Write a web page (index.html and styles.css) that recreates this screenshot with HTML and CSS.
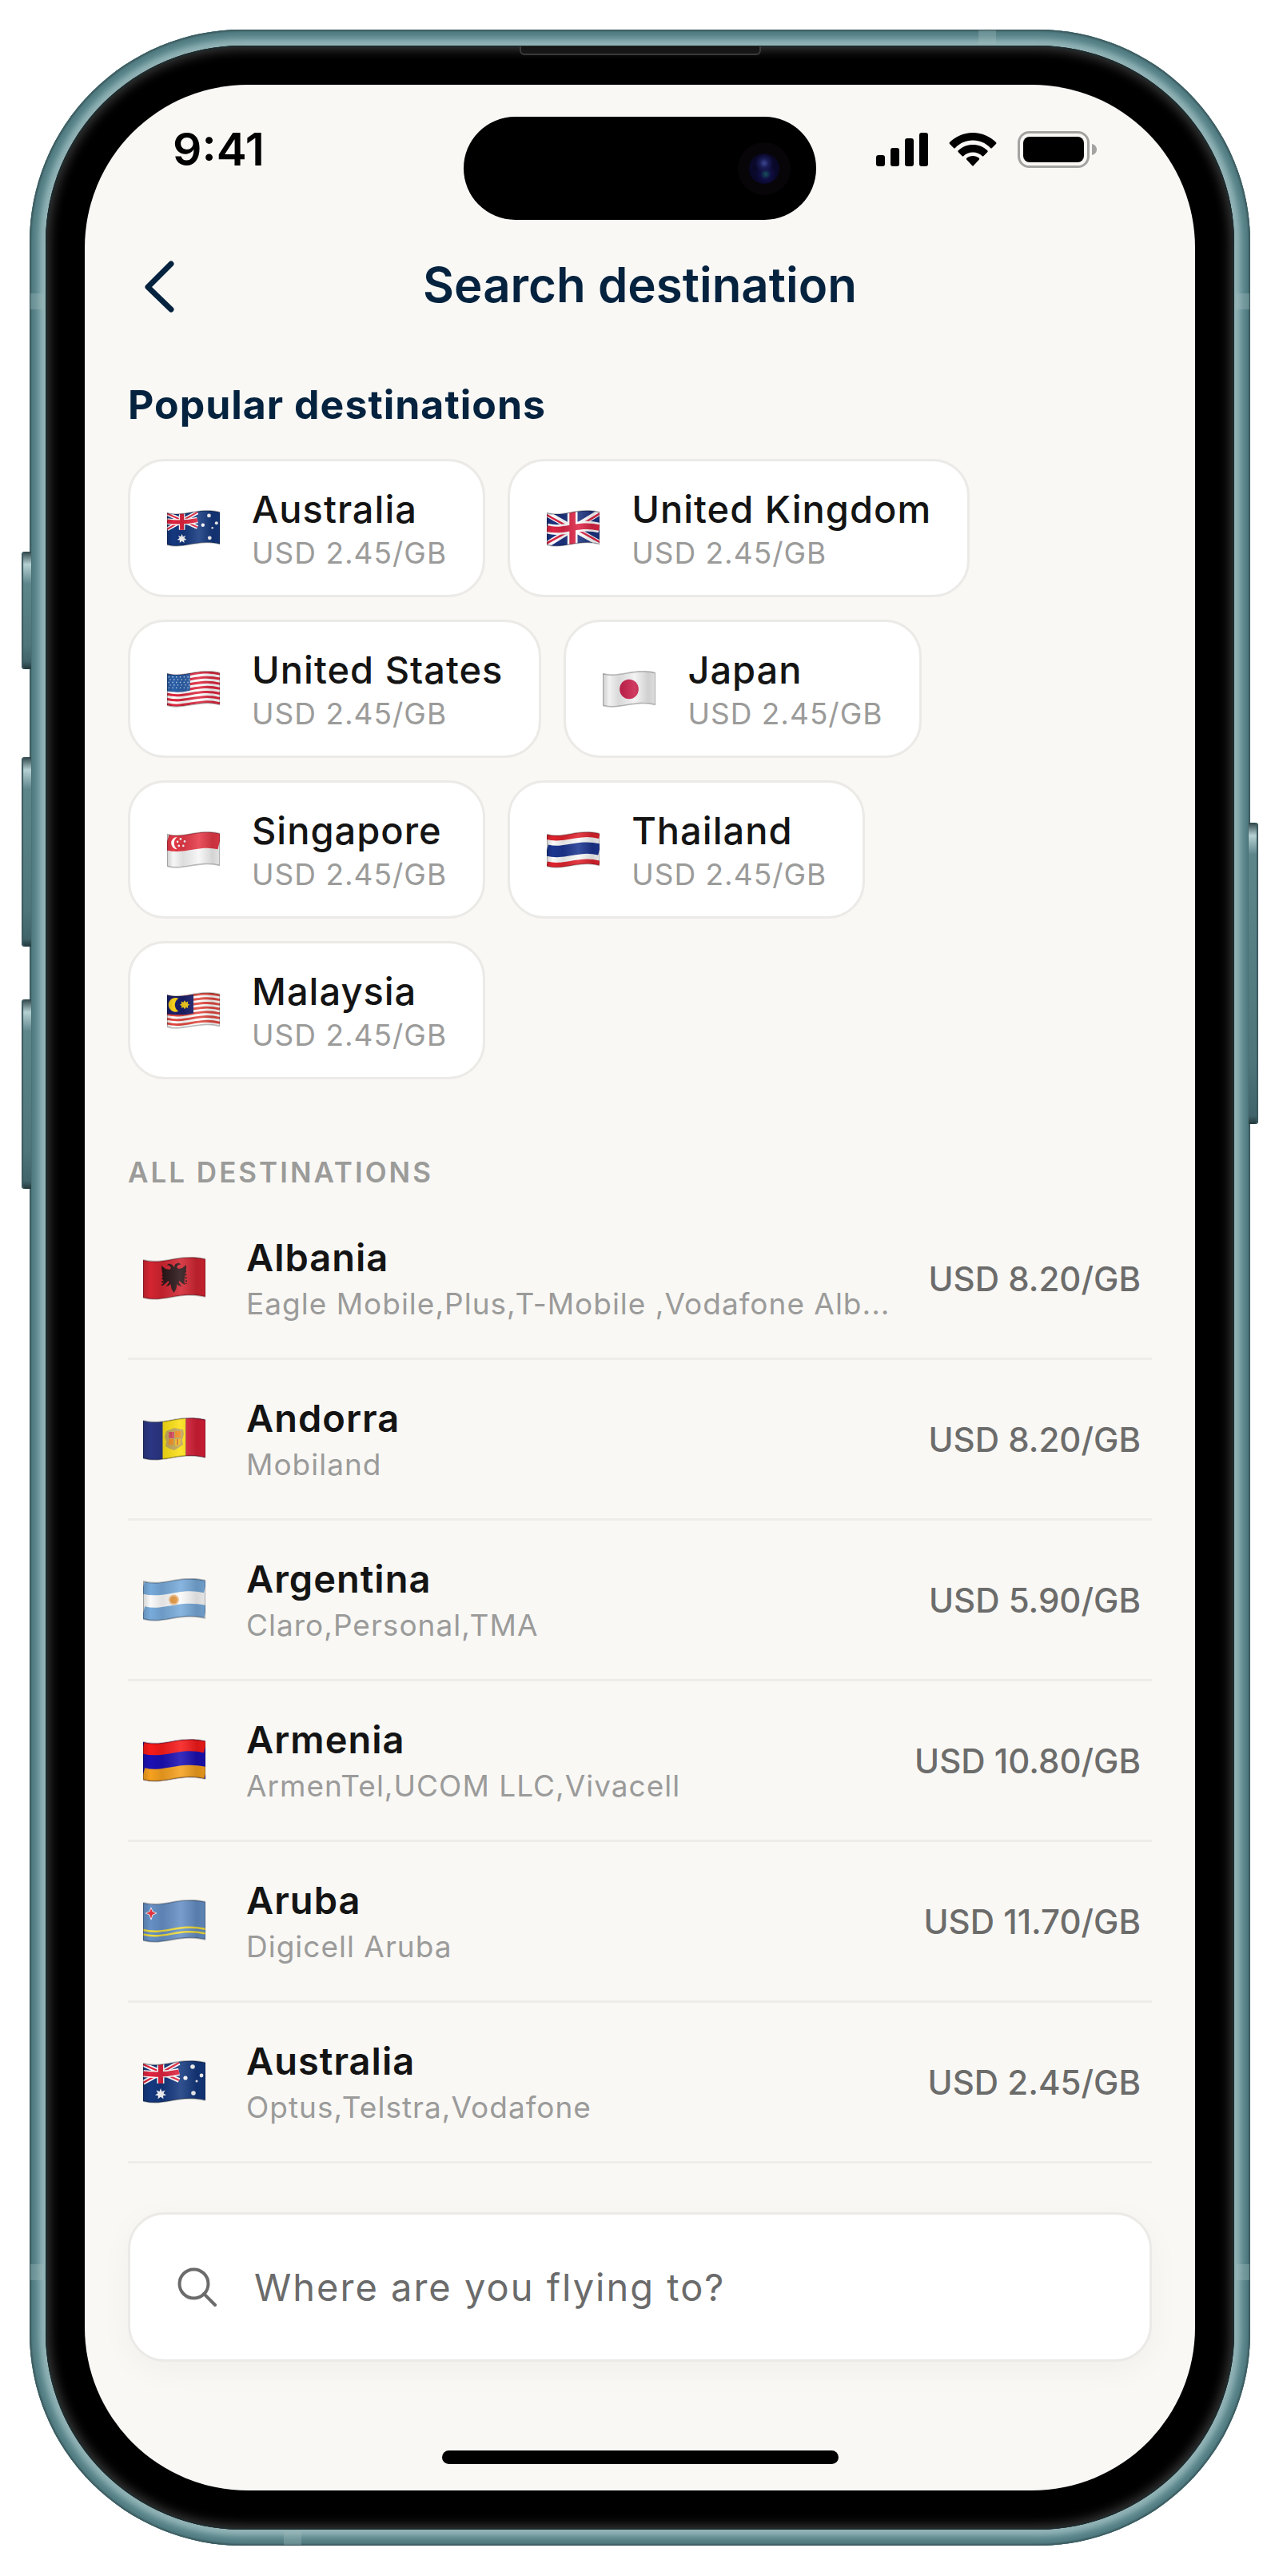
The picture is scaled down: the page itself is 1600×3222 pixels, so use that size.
FILE: index.html
```html
<!DOCTYPE html>
<html lang="en">
<head>
    <meta charset="UTF-8">
    <meta name="viewport" content="width=device-width, initial-scale=1.0">
    <title>Search destination</title>
    <link rel="stylesheet" href="styles.css">
</head>
<body>

    <!-- flag artwork, reused with <use> -->
    <svg class="sprite" aria-hidden="true">
        <defs>
            <clipPath id="cloth"><path d="M0 4c26 7 46-9 78-1v47c-32-8-52 8-78 1z"/></clipPath>
            <linearGradient id="shade">
                <stop offset="0" stop-color="#000" stop-opacity=".16"/>
                <stop offset=".12" stop-color="#000" stop-opacity="0"/>
                <stop offset=".3" stop-color="#000" stop-opacity=".1"/>
                <stop offset=".6" stop-color="#fff" stop-opacity=".12"/>
                <stop offset=".86" stop-color="#000" stop-opacity=".14"/>
                <stop offset="1" stop-color="#000" stop-opacity=".08"/>
            </linearGradient>
            <path id="band" fill="none" d="M0 0c26 7 46-9 78-1"/>
            <g id="fold">
                <path d="M0 4c26 7 46-9 78-1v47c-32-8-52 8-78 1z" fill="url(#shade)"/>
                <path d="M0 4c26 7 46-9 78-1v47c-32-8-52 8-78 1z" fill="none" stroke="#000" stroke-opacity=".25" stroke-width="2"/>
            </g>

            <symbol id="flag-au" viewBox="0 0 78 54">
                <g clip-path="url(#cloth)">
                    <rect width="78" height="54" fill="#14387f"/>
                    <path d="M0 5l45 20M0 28L45 3" stroke="#fff" stroke-width="6"/>
                    <path d="M0 5l45 20M0 28L45 3" stroke="#e0243f" stroke-width="2.4"/>
                    <path d="M22 2v27M0 16.500q22 3 45-2" stroke="#fff" stroke-width="9" fill="none"/>
                    <path d="M22 2v27M0 16.500q22 3 45-2" stroke="#e0243f" stroke-width="6" fill="none"/>
                    <path d="M22 35l1.500 4 4-1.500-2 3.700 3.500 2.300-4 .8.500 4-3.500-2.600-3.500 2.600.5-4-4-.8 3.500-2.300-2-3.700 4 1.500z" fill="#fff"/>
                    <g fill="#fff">
                        <circle cx="62" cy="8" r="2.800"/><circle cx="53" cy="22" r="2.600"/>
                        <circle cx="73" cy="19" r="2.400"/><circle cx="67" cy="26" r="1.500"/>
                        <circle cx="63" cy="41" r="2.800"/>
                    </g>
                </g>
                <use href="#fold"/>
            </symbol>

            <symbol id="flag-gb" viewBox="0 0 78 54">
                <g clip-path="url(#cloth)">
                    <rect width="78" height="54" fill="#1c3380"/>
                    <path d="M-2 4l82 46M-2 52L80 2" stroke="#fff" stroke-width="9"/>
                    <path d="M-2 6l40 22M80 48L40 26M-2 50l40-22M80 4L40 28" stroke="#dc2646" stroke-width="3"/>
                    <path d="M38 0v54" stroke="#fff" stroke-width="15"/>
                    <use href="#band" y="27" stroke="#fff" stroke-width="15"/>
                    <path d="M38 0v54" stroke="#dc2646" stroke-width="9"/>
                    <use href="#band" y="27" stroke="#dc2646" stroke-width="9"/>
                </g>
                <use href="#fold"/>
            </symbol>

            <symbol id="flag-us" viewBox="0 0 78 54">
                <g clip-path="url(#cloth)">
                    <rect width="78" height="54" fill="#fff"/>
                    <g stroke="#e0283f" stroke-width="3.600">
                        <use href="#band" y="5.500"/><use href="#band" y="12.800"/><use href="#band" y="20"/>
                        <use href="#band" y="27.200"/><use href="#band" y="34.400"/><use href="#band" y="41.600"/>
                        <use href="#band" y="49"/>
                    </g>
                    <path d="M0 3q17 4 34 0v26q-17 4-34 1z" fill="#2c5fa8"/>
                    <g stroke="#c9dcf2" stroke-width="1.600" stroke-dasharray="1.600 4">
                        <path d="M2 9h31M4 13h30M2 17h31M4 21h30M2 25h31"/>
                    </g>
                </g>
                <use href="#fold"/>
            </symbol>

            <symbol id="flag-jp" viewBox="0 0 78 54">
                <g clip-path="url(#cloth)">
                    <rect width="78" height="54" fill="#f1f1f1"/>
                    <ellipse cx="39" cy="27" rx="14" ry="14.500" fill="#c9204c"/>
                </g>
                <use href="#fold"/>
            </symbol>

            <symbol id="flag-sg" viewBox="0 0 78 54">
                <g clip-path="url(#cloth)">
                    <rect width="78" height="54" fill="#f6f6f6"/>
                    <use href="#band" y="15" stroke="#e63a48" stroke-width="25"/>
                    <path d="M15 8a9 9 0 1 0 0 18 11 11 0 0 1 0-18z" fill="#fff"/>
                    <g fill="#fff">
                        <circle cx="20" cy="11" r="1.600"/><circle cx="15.500" cy="15" r="1.600"/><circle cx="26" cy="14.500" r="1.600"/>
                        <circle cx="17.500" cy="21" r="1.600"/><circle cx="24" cy="21" r="1.600"/>
                    </g>
                </g>
                <use href="#fold"/>
            </symbol>

            <symbol id="flag-th" viewBox="0 0 78 54">
                <g clip-path="url(#cloth)">
                    <rect width="78" height="54" fill="#f8f8f8"/>
                    <use href="#band" y="7" stroke="#e0232e" stroke-width="9"/>
                    <use href="#band" y="27.500" stroke="#1c3590" stroke-width="17"/>
                    <use href="#band" y="48.500" stroke="#e0232e" stroke-width="9"/>
                </g>
                <use href="#fold"/>
            </symbol>

            <symbol id="flag-my" viewBox="0 0 78 54">
                <g clip-path="url(#cloth)">
                    <rect width="78" height="54" fill="#fff"/>
                    <g stroke="#e2483f" stroke-width="3.400">
                        <use href="#band" y="5.500"/><use href="#band" y="12.200"/><use href="#band" y="19"/>
                        <use href="#band" y="25.700"/><use href="#band" y="32.400"/><use href="#band" y="39.200"/>
                        <use href="#band" y="46"/>
                    </g>
                    <path d="M0 3q20 5 39 0v28q-20 4-39 1z" fill="#1a1f6c"/>
                    <path d="M17 9a10.500 10.500 0 1 0 0 19 11 11 0 0 1 0-19z" fill="#f6cf1d"/>
                    <path d="M26 12l2 3 3-1.500-.5 3.500 3 1.500-3 1.500.5 3.500-3-1.500-2 3-2-3-3 1.500.5-3.500-3-1.500 3-1.500-.5-3.500 3 1.500z" fill="#f6cf1d"/>
                </g>
                <use href="#fold"/>
            </symbol>

            <symbol id="flag-al" viewBox="0 0 78 54">
                <g clip-path="url(#cloth)">
                    <rect width="78" height="54" fill="#d32531"/>
                    <path d="M38.500 13l-2-3-4-1.500-3 2 3.500.5 2 3-2 2-5-1-5-4 .5 6 1 5 .5 5 .5 5-1 4 4-3 3-3 1 2-4 5 4-1 2-2 1 6 3 5 3-5 1-6 2 2 4 1-4-5 1-2 3 3 4 2-1-4 .500-5 .5-5 1-5 .5-6-5 4-5 1-2-2 2-3 3.500-.5-3-2-4 1.500z" fill="#2a1517"/>
                    <path d="M25 14l-1 22M53 13l1 21" stroke="#2a1517" stroke-width="1.600" stroke-dasharray="2.500 1.500"/>
                </g>
                <use href="#fold"/>
            </symbol>

            <symbol id="flag-ad" viewBox="0 0 78 54">
                <g clip-path="url(#cloth)">
                    <rect width="78" height="54" fill="#2b3684"/>
                    <rect x="24.500" width="29" height="54" fill="#fbe014"/>
                    <rect x="53.500" width="25" height="54" fill="#d81f37"/>
                    <path d="M29 17l5-2 5-2 5 1 6 1 1 6-2 7 1 6-6 4-5 3-6-2-5-3 1-6-2-6z" fill="#c3a655"/>
                    <path d="M32 18h7v8h-7z" fill="#d9506a"/>
                    <path d="M40 17h7v8h-7zM32 27h6v7h-6z" fill="#f08c1c"/>
                    <path d="M40 27h7l-1 7-6 2z" fill="#eebb22"/>
                    <path d="M43 27v7M35 18v7" stroke="#c5362f"/>
                </g>
                <use href="#fold"/>
            </symbol>

            <symbol id="flag-ar" viewBox="0 0 78 54">
                <g clip-path="url(#cloth)">
                    <rect width="78" height="54" fill="#fafafa"/>
                    <use href="#band" y="11" stroke="#78abdb" stroke-width="17"/>
                    <use href="#band" y="43.500" stroke="#78abdb" stroke-width="17"/>
                    <circle cx="38.500" cy="27" r="6.500" fill="#f0c08a"/>
                    <circle cx="38.500" cy="27" r="4.500" fill="#e2963f"/>
                </g>
                <use href="#fold"/>
            </symbol>

            <symbol id="flag-am" viewBox="0 0 78 54">
                <g clip-path="url(#cloth)">
                    <rect width="78" height="54" fill="#1c10b4"/>
                    <use href="#band" y="10" stroke="#f81b1b" stroke-width="17"/>
                    <use href="#band" y="44.500" stroke="#f6a11f" stroke-width="17"/>
                </g>
                <use href="#fold"/>
            </symbol>

            <symbol id="flag-aw" viewBox="0 0 78 54">
                <g clip-path="url(#cloth)">
                    <rect width="78" height="54" fill="#6690c6"/>
                    <path d="M10 10l2 5 5 2-5 2-2 6-2-6-5-2 5-2z" fill="#e5323c" stroke="#fff" stroke-width=".8"/>
                    <use href="#band" y="38" stroke="#f0dc3c" stroke-width="2.500"/>
                    <use href="#band" y="43.500" stroke="#f0dc3c" stroke-width="2.500"/>
                </g>
                <use href="#fold"/>
            </symbol>
        </defs>
    </svg>

    <div class="phone">
        <span class="side-btn action"></span>
        <span class="side-btn volume-up"></span>
        <span class="side-btn volume-down"></span>
        <span class="side-btn power"></span>
        <span class="band band-top"></span>
        <span class="band band-bottom"></span>
        <span class="band band-left-top"></span>
        <span class="band band-left-bottom"></span>
        <span class="band band-right-top"></span>
        <span class="band band-right-bottom"></span>

        <div class="bezel">
            <span class="speaker"></span>
            <div class="screen">

                <div class="status-bar">
                    <span class="time">9:41</span>
                    <div class="island"><span class="camera"></span></div>
                    <div class="status-icons">
                        <svg width="65" height="42" viewBox="0 0 65 42" aria-hidden="true">
                            <rect x="0" y="28" width="11" height="14" rx="3"/>
                            <rect x="18" y="19" width="11" height="23" rx="3"/>
                            <rect x="36" y="7" width="11" height="35" rx="3"/>
                            <rect x="54" y="0" width="11" height="42" rx="3"/>
                        </svg>
                        <svg width="60" height="42" viewBox="0 0 60 42" aria-hidden="true">
                            <path d="M30 0C18 0 8 5 1 12q-1 1 0 2l5 5q1 1 2 0C14 13 21 9.500 30 9.500S46 13 52 19q1 1 2 0l5-5q1-1 0-2C52 5 42 0 30 0z"/>
                            <path d="M30 15c-7 0-13 2.500-18 7-1 1-1 1.500 0 2.500l4.500 4.500q1 1 2 0c3-3 7-4.500 11.500-4.500S38.500 26 41.500 29q1 1 2 0l4.500-4.500c1-1 1-1.500 0-2.500-5-4.500-11-7-18-7z"/>
                            <path d="M30 29c-3 0-5.500 1-7.500 2.500-1 1-1 1.500 0 2.500l6.500 7q1 1 2 0l6.500-7c1-1 1-1.500 0-2.500C35.500 30 33 29 30 29z"/>
                        </svg>
                        <svg width="100" height="46" viewBox="0 0 100 46" aria-hidden="true">
                            <rect x="1.500" y="1.500" width="87" height="43" rx="13" fill="none" stroke="#a3a3a1" stroke-width="3"/>
                            <rect x="7" y="7" width="76" height="32" rx="8"/>
                            <path d="M93 16c4 1 6 4 6 7s-2 6-6 7z" fill="#a3a3a1"/>
                        </svg>
                    </div>
                </div>

                <header class="header">
                    <button class="back-btn" type="button" aria-label="Back">
                        <svg width="38" height="70" viewBox="0 0 38 70" aria-hidden="true"><path d="M34 9L5 38l29 28"/></svg>
                    </button>
                    <h1>Search destination</h1>
                </header>

                <main class="content">
                    <h2>Popular destinations</h2>
                    <div class="chips">
                        <button class="chip" type="button"><svg class="flag"><use href="#flag-au"/></svg><span class="info"><span class="name">Australia</span><span class="sub">USD 2.45/GB</span></span></button>
                        <button class="chip" type="button"><svg class="flag"><use href="#flag-gb"/></svg><span class="info"><span class="name">United Kingdom</span><span class="sub">USD 2.45/GB</span></span></button>
                        <button class="chip" type="button"><svg class="flag"><use href="#flag-us"/></svg><span class="info"><span class="name">United States</span><span class="sub">USD 2.45/GB</span></span></button>
                        <button class="chip" type="button"><svg class="flag"><use href="#flag-jp"/></svg><span class="info"><span class="name">Japan</span><span class="sub">USD 2.45/GB</span></span></button>
                        <button class="chip" type="button"><svg class="flag"><use href="#flag-sg"/></svg><span class="info"><span class="name">Singapore</span><span class="sub">USD 2.45/GB</span></span></button>
                        <button class="chip" type="button"><svg class="flag"><use href="#flag-th"/></svg><span class="info"><span class="name">Thailand</span><span class="sub">USD 2.45/GB</span></span></button>
                        <button class="chip" type="button"><svg class="flag"><use href="#flag-my"/></svg><span class="info"><span class="name">Malaysia</span><span class="sub">USD 2.45/GB</span></span></button>
                    </div>

                    <h3>ALL DESTINATIONS</h3>
                    <ul class="list">
                        <li><a href="#"><svg class="flag"><use href="#flag-al"/></svg><span class="info"><span class="name">Albania</span><span class="sub">Eagle Mobile,Plus,T-Mobile ,Vodafone Alb...</span></span><span class="price">USD 8.20/GB</span></a></li>
                        <li><a href="#"><svg class="flag"><use href="#flag-ad"/></svg><span class="info"><span class="name">Andorra</span><span class="sub">Mobiland</span></span><span class="price">USD 8.20/GB</span></a></li>
                        <li><a href="#"><svg class="flag"><use href="#flag-ar"/></svg><span class="info"><span class="name">Argentina</span><span class="sub">Claro,Personal,TMA</span></span><span class="price">USD 5.90/GB</span></a></li>
                        <li><a href="#"><svg class="flag"><use href="#flag-am"/></svg><span class="info"><span class="name">Armenia</span><span class="sub">ArmenTel,UCOM LLC,Vivacell</span></span><span class="price">USD 10.80/GB</span></a></li>
                        <li><a href="#"><svg class="flag"><use href="#flag-aw"/></svg><span class="info"><span class="name">Aruba</span><span class="sub">Digicell Aruba</span></span><span class="price">USD 11.70/GB</span></a></li>
                        <li><a href="#"><svg class="flag"><use href="#flag-au"/></svg><span class="info"><span class="name">Australia</span><span class="sub">Optus,Telstra,Vodafone</span></span><span class="price">USD 2.45/GB</span></a></li>
                    </ul>

                    <label class="search">
                        <svg width="50" height="50" viewBox="0 0 50 50" aria-hidden="true"><circle cx="20.500" cy="20.500" r="18"/><path d="M33 33l14 14"/></svg>
                        <input type="text" placeholder="Where are you flying to?" aria-label="Where are you flying to?">
                    </label>
                </main>

                <div class="home-bar"></div>
            </div>
        </div>
    </div>

</body>
</html>
```
FILE: styles.css
```css
* {
    margin: 0;
    padding: 0;
    box-sizing: border-box;
}

body {
    font-family: 'Inter', sans-serif;
    background: #fff;
    color: #141414;
}

button, input {
    font: inherit;
    color: inherit;
    border: none;
    background: none;
}

.sprite {
    position: absolute;
    width: 0;
    height: 0;
}

/* device frame */
.phone {
    position: relative;
    margin: 37px 36px 37px 37px;
    padding: 20px;
    border-radius: 266px;
    background: #94b5b8;
    box-shadow: inset 0 0 2px 2px #3c5a5e, inset 0 0 8px 8px #4f7a80, inset 0 0 8px 12px #649094;
}

.bezel {
    position: relative;
    padding: 49px;
    border-radius: 246px;
    background: #000;
    box-shadow: inset 0 0 2px 2px #1d2b2d, inset 0 0 14px 5px #3c3a3a;
}

.speaker {
    position: absolute;
    top: 1px;
    left: 50%;
    width: 302px;
    height: 11px;
    margin-left: -151px;
    background: #161616;
    border: 2px solid #3a3a3a;
    border-top: none;
    border-radius: 0 0 6px 6px;
}

.side-btn {
    position: absolute;
    left: -10px;
    width: 12px;
    border-radius: 4px 0 0 4px;
    background: linear-gradient(to bottom, #2c4347, #b5d0d3 16px, #5d868b 40px, #4d757a 80%, #40646a calc(100% - 10px), #22373b);
    box-shadow: inset 2px 0 1px #3c5a60;
}

.action {
    top: 653px;
    height: 147px;
}

.volume-up {
    top: 910px;
    height: 237px;
}

.volume-down {
    top: 1213px;
    height: 237px;
}

.power {
    left: auto;
    right: -10px;
    top: 992px;
    height: 377px;
    border-radius: 0 4px 4px 0;
    box-shadow: inset -2px 0 1px #3c5a60;
}

.band {
    position: absolute;
    width: 17px;
    height: 20px;
    background: rgba(160, 190, 190, 0.35);
}

.band-top, .band-bottom {
    width: 22px;
    height: 17px;
}

.band-top {
    top: 1px;
    right: 318px;
}

.band-bottom {
    bottom: 1px;
    left: 318px;
}

.band-left-top, .band-left-bottom {
    left: 1px;
}

.band-right-top, .band-right-bottom {
    right: 1px;
}

.band-left-top, .band-right-top {
    top: 330px;
}

.band-left-bottom, .band-right-bottom {
    bottom: 332px;
}

.screen {
    border-radius: 204px;
    background: #f9f8f5;
    padding: 40px 0 33px;
    overflow: hidden;
}

/* status bar */
.status-bar {
    display: grid;
    grid-template-columns: 1fr 441px 1fr;
}

.time {
    padding-left: 110px;
    font-size: 57px;
    font-weight: 600;
    line-height: 82px;
    color: #000;
}

.island {
    display: flex;
    align-items: center;
    justify-content: flex-end;
    height: 129px;
    padding-right: 46px;
    border-radius: 65px;
    background: #000;
}

.camera {
    width: 38px;
    height: 38px;
    border-radius: 50%;
    background: radial-gradient(circle at 50% 32%, #3d4791 0, #181b52 18%, transparent 36%), radial-gradient(circle at 55% 68%, #17505a 0, #100e44 20%, transparent 40%), #090829;
    box-shadow: 0 0 0 14px #070508;
}

.status-icons {
    display: flex;
    align-items: center;
    justify-content: flex-end;
    gap: 26px;
    height: 82px;
    padding-right: 122px;
}

/* title row */
.header {
    display: grid;
    grid-template-columns: 200px 1fr 200px;
    align-items: center;
    height: 162px;
    color: #05233f;
}

.header h1 {
    font-size: 60px;
    font-weight: 600;
    line-height: 72px;
    text-align: center;
}

.back-btn {
    justify-self: start;
    display: flex;
    margin-left: 74px;
    cursor: pointer;
}

.back-btn svg {
    fill: none;
    stroke: #05233f;
    stroke-width: 7;
    stroke-linecap: round;
    stroke-linejoin: round;
}

.content {
    padding: 39px 54px 0;
}

h2 {
    font-size: 50px;
    font-weight: 700;
    line-height: 60px;
    letter-spacing: 1px;
    color: #05233f;
}

/* popular */
.chips {
    display: flex;
    flex-wrap: wrap;
    gap: 28px;
    margin-top: 38px;
}

.chip {
    display: flex;
    align-items: center;
    gap: 40px;
    padding: 29px 45px 29px 46px;
    border: 3px solid #ebeae7;
    border-radius: 46px;
    background: #fff;
    text-align: left;
    cursor: pointer;
}

.flag {
    flex: none;
    width: 66px;
    height: 46px;
}

.info {
    display: flex;
    flex-direction: column;
}

.name {
    font-size: 47px;
    font-weight: 500;
    line-height: 62px;
    letter-spacing: 1px;
}

.sub {
    font-size: 37px;
    line-height: 47px;
    letter-spacing: 1px;
    color: #9b9b9a;
}

/* all destinations */
h3 {
    margin-top: 93px;
    font-size: 35px;
    font-weight: 600;
    line-height: 46px;
    letter-spacing: 3px;
    color: #9b9b99;
}

.list {
    margin-top: 11px;
    list-style: none;
}

.list a {
    display: flex;
    align-items: center;
    padding: 41px 14px 41px 19px;
    border-bottom: 3px solid #eeedea;
    color: inherit;
    text-decoration: none;
}

.list .flag {
    width: 78px;
    height: 54px;
}

.list .info {
    flex: 1;
    min-width: 0;
    margin: 0 40px 0 51px;
}

.list .name {
    font-weight: 600;
    line-height: 64px;
}

.list .sub {
    line-height: 52px;
    overflow: hidden;
    white-space: nowrap;
    text-overflow: ellipsis;
}

.price {
    font-size: 42px;
    font-weight: 500;
    color: #6c6c6b;
}

/* search box */
.search {
    display: flex;
    align-items: center;
    gap: 46px;
    height: 187px;
    margin-top: 61px;
    padding: 0 59px;
    border: 3px solid #ebeae7;
    border-radius: 46px;
    background: #fff;
    box-shadow: 0 10px 40px rgba(0, 0, 0, 0.04);
}

.search svg {
    flex: none;
    fill: none;
    stroke: #6b6b6b;
    stroke-width: 4;
    stroke-linecap: round;
}

.search input {
    flex: 1;
    min-width: 0;
    font-size: 47px;
    letter-spacing: 2px;
    outline: none;
}

.search input::placeholder {
    color: #6b6b6b;
    opacity: 1;
}

.home-bar {
    width: 496px;
    height: 17px;
    margin: 111px auto 0;
    border-radius: 9px;
    background: #000;
}
```
